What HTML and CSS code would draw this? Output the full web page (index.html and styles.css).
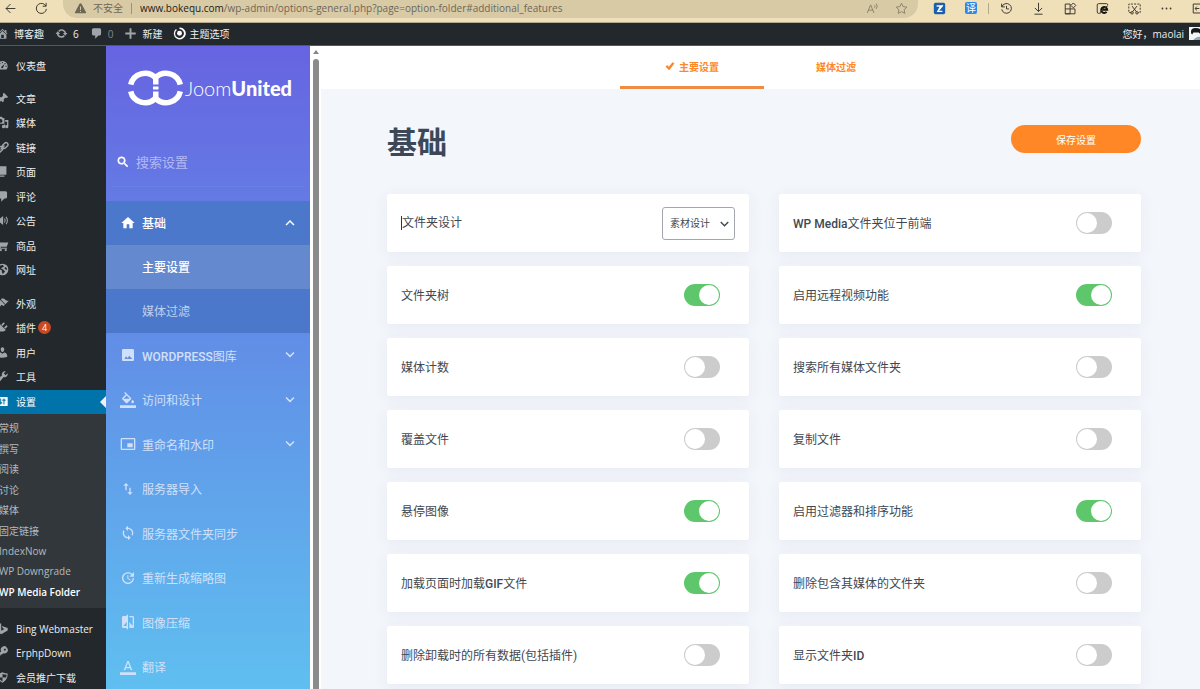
FILE: index.html
```html
<!DOCTYPE html>
<html lang="zh-CN">
<head>
<meta charset="utf-8">
<title>WP Media Folder - 主要设置</title>
<link rel="stylesheet" href="styles.css">
</head>
<body>
<svg class="sprite" aria-hidden="true">
  <symbol id="d-home" viewBox="0 0 20 20"><path d="M16 8.500l1.530 1.530-1.060 1.060L10 4.600l-6.470 6.490-1.060-1.060L10 2.500l4 4v-2h2v4zm-6-2.460l6 5.990V18H4v-5.970zM12 17v-5H8v5h4z"/></symbol>
  <symbol id="d-update" viewBox="0 0 20 20"><path d="M10.200 3.280c3.530 0 6.430 2.610 6.920 6h2.080l-3.500 4-3.500-4h2.320c-.45-1.970-2.210-3.450-4.320-3.450-1.450 0-2.730.71-3.540 1.780L4.950 5.660C6.230 4.200 8.110 3.280 10.200 3.280zm-.4 13.440c-3.520 0-6.430-2.610-6.920-6H.8l3.500-4c1.170 1.330 2.330 2.670 3.500 4H5.480c.45 1.970 2.210 3.450 4.320 3.450 1.450 0 2.730-.71 3.540-1.780l1.710 1.950c-1.280 1.460-3.150 2.380-5.250 2.380z"/></symbol>
  <symbol id="d-comment" viewBox="0 0 20 20"><path d="M5 2h10q.82 0 1.410.59T17 4v7q0 .82-.59 1.410T15 13h-2l-5 5v-5H5q-.82 0-1.410-.59T3 11V4q0-.82.59-1.410T5 2z"/></symbol>
  <symbol id="d-plus" viewBox="0 0 20 20"><path d="M18 8.500v3h-6.500V18h-3v-6.500H2v-3h6.500V2h3v6.500z"/></symbol>
  <symbol id="d-target" viewBox="0 0 20 20"><path d="M4.500 3A9.200 9.200 0 1 0 10 .8v2.400A6.800 6.800 0 1 1 6 4.500z"/><circle cx="10" cy="9.600" r="3.800"/></symbol>
  <symbol id="d-dash" viewBox="0 0 20 20"><path d="M3.760 16h12.480A8.150 8.150 0 0 0 18 11c0-4.420-3.580-8-8-8s-8 3.580-8 8c0 1.890.66 3.630 1.760 5zM10 4.500a1 1 0 1 1 0 2 1 1 0 0 1 0-2zM6 6a1 1 0 1 1 0 2 1 1 0 0 1 0-2zm8 0a1 1 0 1 1 0 2 1 1 0 0 1 0-2zm-5.400 5.400l4.600-3.900-2.200 5.600a1.500 1.500 0 1 1-2.400-1.700zM4.500 10a1 1 0 1 1 0 2 1 1 0 0 1 0-2zm11 0a1 1 0 1 1 0 2 1 1 0 0 1 0-2z" fill-rule="evenodd"/></symbol>
  <symbol id="d-pin" viewBox="0 0 20 20"><path d="M10.440 3.020l1.820-1.820 6.360 6.350-1.830 1.820c-1.050-.68-2.480-.57-3.410.36l-.75.75c-.92.93-1.040 2.350-.35 3.410l-1.830 1.820-2.410-2.410-2.800 2.790c-.42.420-3.380 2.710-3.800 2.290s1.860-3.390 2.280-3.810l2.790-2.790L4.100 9.360l1.830-1.820c1.050.69 2.480.57 3.400-.36l.75-.75c.93-.92 1.050-2.350.36-3.410z"/></symbol>
  <symbol id="d-media" viewBox="0 0 20 20"><path fill-rule="evenodd" d="M13 11V4c0-.55-.45-1-1-1h-1.670L9 1H5L3.670 3H2c-.55 0-1 .45-1 1v7c0 .55.450 1 1 1h10c.55 0 1-.45 1-1zM7 4.500a3 3 0 1 1 0 6 3 3 0 0 1 0-6z"/><path d="M14 6h5v10.500a2.500 2.500 0 1 1-2-2.450V9h-3v7.500a2.500 2.500 0 1 1-2-2.450V13h2z"/></symbol>
  <symbol id="d-link" viewBox="0 0 20 20"><g fill="none" stroke="currentColor" stroke-width="2.200"><rect x="9" y="4" width="10" height="6" rx="3" transform="rotate(-45 14 7)"/><rect x="1" y="10" width="10" height="6" rx="3" transform="rotate(-45 6 13)"/><path d="M7 13l6-6"/></g></symbol>
  <symbol id="d-page" viewBox="0 0 20 20"><path d="M6 15V2h10v13H6zm-1 1h8v2H3V5h2v11z"/></symbol>
  <symbol id="d-sound" viewBox="0 0 20 20"><path d="M2 7h4l5-4v14l-5-4H2z"/><path d="M13 7q2 3 0 6M15.500 4.500q4 5.500 0 11" fill="none" stroke="currentColor" stroke-width="1.600"/></symbol>
  <symbol id="d-cart" viewBox="0 0 20 20"><path d="M1 3h3l1 2.500h14L16.500 12H7l.4 1.500H17V15H6L3.300 4.700H1z"/><circle cx="7.500" cy="17" r="1.700"/><circle cx="15" cy="17" r="1.700"/></symbol>
  <symbol id="d-globe" viewBox="0 0 20 20"><path fill-rule="evenodd" d="M10 1a9 9 0 1 1 0 18 9 9 0 0 1 0-18zM4 6l2 4 3 1v3l1.500 3L14 13l-3-3-3-1 1-2 3-1-1-3q-4-.5-7 3zm10 0l-1 2 3 3 1-2q-.5-2-3-3z"/></symbol>
  <symbol id="d-brush" viewBox="0 0 20 20"><path d="M14.480 11.060L7.410 3.990l1.500-1.500c.5-.56 2.300-.47 3.510.32 1.210.8 1.430 1.280 2.910 2.100 1.180.640 2.450 1.260 4.450.85zm-.71.71L6.700 4.700 4.930 6.470c-.39.390-.39 1.020 0 1.410l1.060 1.060c.39.390.39 1.030 0 1.420-.6.600-1.430 1.110-2.210 1.690-.35.260-.7.530-1.010.84C1.430 14.230.4 16.080 1.400 17.070c.99 1 2.840-.03 4.180-1.360.31-.31.580-.66.850-1.020.57-.78 1.080-1.610 1.690-2.210.39-.39 1.020-.39 1.410 0l1.060 1.060c.39.390 1.020.39 1.410 0z"/></symbol>
  <symbol id="d-plug" viewBox="0 0 20 20"><path d="M13.110 4.360L9.870 7.600 8 5.730l3.240-3.240c.35-.34 1.050-.2 1.560.32.520.51.660 1.210.31 1.550zm-8 1.770l.91-1.120 9.010 9.010-1.190.84c-.71.71-2.630 1.160-3.820 1.160H6.140L4.900 17.260c-.59.590-1.540.590-2.120 0-.59-.58-.59-1.530 0-2.120l1.240-1.240v-3.880c0-1.130.4-3.190 1.090-3.890zm7.260 3.970l3.240-3.240c.34-.35 1.040-.21 1.550.31.520.51.660 1.210.31 1.550l-3.240 3.250z"/></symbol>
  <symbol id="d-user" viewBox="0 0 20 20"><path d="M10 9.250c-2.270 0-2.730-3.440-2.730-3.440C7 4.020 7.820 2 9.970 2c2.160 0 2.980 2.020 2.710 3.810 0 0-.41 3.440-2.680 3.440zm0 2.570L12.720 10c2.390 0 4.520 2.330 4.520 4.530v2.490s-3.650 1.130-7.240 1.130c-3.650 0-7.240-1.130-7.240-1.130v-2.490c0-2.250 1.940-4.480 4.470-4.480z"/></symbol>
  <symbol id="d-wrench" viewBox="0 0 20 20"><path d="M16.680 9.770c-1.340 1.340-3.300 1.670-4.950.99l-5.410 6.520c-.99.990-2.590.99-3.580 0s-.99-2.590 0-3.570l6.520-5.420c-.68-1.650-.35-3.610.99-4.950 1.280-1.280 3.120-1.620 4.720-1.060l-2.890 2.890 2.820 2.820 2.860-2.870c.53 1.580.18 3.390-1.080 4.650z"/></symbol>
  <symbol id="d-settings" viewBox="0 0 20 20"><path fill-rule="evenodd" d="M18 16V4c0-.55-.45-1-1-1H3c-.55 0-1 .45-1 1v12c0 .55.450 1 1 1h14c.55 0 1-.45 1-1zM8 11h1c.55 0 1 .45 1 1s-.45 1-1 1H8v1.500H6.500V13h-1c-.55 0-1-.45-1-1s.45-1 1-1h1V5.500H8zm5-2h1c.55 0 1-.45 1-1s-.45-1-1-1h-1V5.500h-1.500V7h-1c-.55 0-1 .45-1 1s.45 1 1 1h1v5.500H13z"/></symbol>
  <symbol id="d-bing" viewBox="0 0 20 20"><path d="M4 1l4 1.500v11l5-2.800-2.500-1.200L9 6l9 3.200V13L8 19l-4-2.500z"/></symbol>
  <symbol id="d-key" viewBox="0 0 20 20"><path fill-rule="evenodd" d="M17 3a5 5 0 0 1-5.500 8L9 13H7v2H5v2H2v-3l6-6a5 5 0 0 1 9-5zm-2 2a1.500 1.500 0 1 0-2 2 1.500 1.500 0 0 0 2-2z"/></symbol>
  <symbol id="d-shield" viewBox="0 0 20 20"><path fill-rule="evenodd" d="M10 2q4 2 8 2 0 10-8 14Q2 14 2 4q4 0 8-2zm0 2.500V10h5.600q.6-2 .7-4.300Q13 5.500 10 4.500zM10 10H4.400q1.400 4 5.600 6z"/></symbol>

  <symbol id="m-search" viewBox="0 0 24 24"><path stroke="currentColor" d="M15.500 14h-.79l-.28-.27A6.471 6.471 0 0 0 16 9.500 6.500 6.500 0 1 0 9.500 16c1.610 0 3.090-.59 4.230-1.570l.27.280v.79l5 4.990L20.490 19l-4.990-5zm-6 0C7.010 14 5 11.990 5 9.500S7.010 5 9.500 5 14 7.010 14 9.500 11.990 14 9.500 14z"/></symbol>
  <symbol id="m-home" viewBox="0 0 24 24"><path d="M10 20v-6h4v6h5v-8h3L12 3 2 12h3v8z"/></symbol>
  <symbol id="m-image" viewBox="0 0 24 24"><path d="M21 19V5c0-1.100-.9-2-2-2H5c-1.100 0-2 .9-2 2v14c0 1.100.9 2 2 2h14c1.100 0 2-.9 2-2zm-14.500-1l2.500-4 2.200 2.600L14 13l4.500 5z"/></symbol>
  <symbol id="m-fill" viewBox="0 0 24 24"><path d="M16.560 8.940L7.620 0 6.210 1.410l2.380 2.380-5.150 5.150c-.59.590-.59 1.540 0 2.120l5.500 5.500c.29.290.68.440 1.060.44s.77-.15 1.060-.44l5.500-5.500c.59-.58.59-1.530 0-2.120zM5.210 10L10 5.210 14.790 10zM19 11.500s-2 2.170-2 3.500c0 1.100.9 2 2 2s2-.9 2-2c0-1.330-2-3.500-2-3.500zM0 20h24v4H0z"/></symbol>
  <symbol id="m-pip" viewBox="0 0 24 24"><path d="M19 11h-8v6h8v-6zm4 8V4.980C23 3.880 22.100 3 21 3H3c-1.100 0-2 .88-2 1.980V19c0 1.100.9 2 2 2h18c1.100 0 2-.9 2-2zm-2 .02H3V4.970h18v14.050z"/></symbol>
  <symbol id="m-import" viewBox="0 0 24 24"><path d="M9 3L5 6.990h3V14h2V6.990h3L9 3zm7 14.010V10h-2v7.010h-3L15 21l4-3.990h-3z"/></symbol>
  <symbol id="m-sync" viewBox="0 0 24 24"><path d="M12 4V1L8 5l4 4V6c3.310 0 6 2.690 6 6 0 1.010-.25 1.970-.7 2.800l1.460 1.460A7.930 7.930 0 0 0 20 12c0-4.420-3.580-8-8-8zm0 14c-3.310 0-6-2.690-6-6 0-1.010.25-1.970.7-2.800L5.240 7.740A7.930 7.930 0 0 0 4 12c0 4.420 3.580 8 8 8v3l4-4-4-4v3z"/></symbol>
  <symbol id="m-update" viewBox="0 0 24 24"><path d="M21 10.120h-6.780l2.740-2.820c-2.730-2.700-7.150-2.800-9.880-.1-2.730 2.710-2.730 7.080 0 9.790s7.150 2.710 9.880 0C18.320 15.650 19 14.080 19 12.100h2c0 1.980-.88 4.550-2.640 6.290-3.510 3.480-9.210 3.480-12.720 0-3.500-3.470-3.530-9.110-.02-12.580s9.140-3.470 12.650 0L21 3v7.120zM12.500 8v4.250l3.500 2.080-.72 1.210L11 13V8h1.500z"/></symbol>
  <symbol id="m-compare" viewBox="0 0 24 24"><path d="M10 3H5c-1.100 0-2 .9-2 2v14c0 1.100.9 2 2 2h5v2h2V1h-2v2zm0 15H5l5-6v6zm9-15h-5v2h5v13l-5-6v9h5c1.100 0 2-.9 2-2V5c0-1.100-.9-2-2-2z"/></symbol>
  <symbol id="m-text" viewBox="0 0 24 24"><path d="M0 20h24v4H0zM11 3L5.500 17h2.250l1.120-3h6.250l1.120 3h2.250L13 3h-2zm-1.380 9L12 5.670 14.380 12H9.620z"/></symbol>
  <symbol id="m-down" viewBox="0 0 24 24"><path d="M7.410 7.840L12 12.420l4.590-4.580L18 9.250l-6 6-6-6z"/></symbol>
  <symbol id="m-up" viewBox="0 0 24 24"><path d="M7.410 15.410L12 10.830l4.590 4.580L18 14l-6-6-6 6z"/></symbol>
  <symbol id="m-check" viewBox="0 0 20 20"><path d="M1 11l3.500-3 3 3.500L15 2.500l4 2L9 18H7.500z"/></symbol>

  <symbol id="b-back" viewBox="0 0 16 16"><path class="line" d="M14 8H2.500M8 2.500L2.500 8 8 13.500"/></symbol>
  <symbol id="b-reload" viewBox="0 0 16 16"><path class="line" d="M14 8.500a6.200 6.200 0 1 1-2-5.200l1.500 1.700M13.700 1v4.200H9.500"/></symbol>
  <symbol id="b-warn" viewBox="0 0 16 16"><path fill-rule="evenodd" d="M8 1.500q.8 0 1.200.7l5.600 10.400q.7 1.400-.8 1.400H2q-1.500 0-.8-1.400L6.800 2.200Q7.200 1.500 8 1.500zM7.400 5.500v4.200h1.200V5.500zm0 5.500v1.300h1.200V11z"/></symbol>
  <symbol id="b-read" viewBox="0 0 16 16"><path class="line" d="M1.500 13.500L5.700 3.500l4.200 10M3 10h5.500M10.500 4q1.300 1.500 0 3M12.500 2q2.800 3 0 6.500"/></symbol>
  <symbol id="b-star" viewBox="0 0 16 16"><path class="line" d="M8 1.500l2 4.200 4.600.6-3.400 3.200.9 4.600L8 11.900l-4.100 2.200.9-4.600L1.400 6.300 6 5.700z"/></symbol>
  <symbol id="b-note" viewBox="0 0 16 16"><rect x="1" y="1" width="14" height="14" rx="2" fill="#1c5fae"/><path d="M4.500 5h5L6 11.500h5.500M7.500 9.500L12 4" fill="none" stroke="#fff" stroke-width="1.700"/></symbol>
  <symbol id="b-history" viewBox="0 0 16 16"><path class="line" d="M2 2v4h4M2.300 6a6 6 0 1 1-.2 3M8 4.700V8.500h3"/></symbol>
  <symbol id="b-download" viewBox="0 0 16 16"><path class="line" d="M8 1v10.500M3.500 7.300L8 11.800l4.500-4.500M3 15h10"/></symbol>
  <symbol id="b-apps" viewBox="0 0 16 16"><path class="line" d="M1.500 2.500h6v12h-6zM7.500 8.500h6v6h-12M1.500 8.500h6M11.500 1.200l3 3-3 3-3-3z"/></symbol>
  <symbol id="b-ie" viewBox="0 0 16 16"><path class="line" d="M4.500 14H3.200Q1.500 14 1.500 12.300V3.700Q1.500 2 3.200 2h9.600q1.700 0 1.700 1.700"/><path d="M6.500 9.600h7.300a3.700 3.700 0 1 0-.8 2.600" fill="none" stroke="#15130e" stroke-width="2.400"/><path d="M5 14.500Q4.500 10 14.800 4.500" class="line"/></symbol>
  <symbol id="b-snip" viewBox="0 0 16 16"><path class="line" stroke-dasharray="2.500 1.500" d="M4 13H1V2.500h14V13h-3"/><path class="line" d="M5 5l5.300 7M11 5l-5.300 7"/><circle class="line" cx="5" cy="13.300" r="1.500"/><circle class="line" cx="11" cy="13.300" r="1.500"/></symbol>
  <symbol id="b-more" viewBox="0 0 16 16"><circle cx="3" cy="8" r="1.100"/><circle cx="8" cy="8" r="1.100"/><circle cx="13" cy="8" r="1.100"/></symbol>
  <symbol id="b-panel" viewBox="0 0 16 16"><path class="line" d="M1.500 2.500h13v11h-13zM11 2.500v11M9 8H4M6 5.700L3.700 8 6 10.300"/></symbol>
</svg>

<header class="browser">
  <button class="nav-btn" aria-label="返回"><svg><use href="#b-back"/></svg></button>
  <button class="nav-btn" aria-label="刷新"><svg><use href="#b-reload"/></svg></button>
  <div class="address">
    <svg><use href="#b-warn"/></svg>
    <span class="insecure">不安全</span>
    <span class="url"><b>www.bokequ.com</b>/wp-admin/options-general.php?page=option-folder#additional_features</span>
    <button aria-label="朗读"><svg><use href="#b-read"/></svg></button>
    <button aria-label="收藏"><svg><use href="#b-star"/></svg></button>
  </div>
  <div class="tools">
    <button aria-label="笔记"><svg><use href="#b-note"/></svg></button>
    <button aria-label="翻译"><span class="translate">译</span></button>
    <span class="rule"></span>
    <button aria-label="历史"><svg><use href="#b-history"/></svg></button>
    <button aria-label="下载"><svg><use href="#b-download"/></svg></button>
    <button aria-label="应用"><svg><use href="#b-apps"/></svg></button>
    <button aria-label="IE 模式"><svg><use href="#b-ie"/></svg></button>
    <button aria-label="截图"><svg><use href="#b-snip"/></svg></button>
    <button aria-label="更多"><svg><use href="#b-more"/></svg></button>
    <button aria-label="侧栏"><svg><use href="#b-panel"/></svg></button>
  </div>
</header>

<nav class="adminbar">
  <a href="#" class="site"><svg><use href="#d-home"/></svg>博客趣</a>
  <a href="#"><svg><use href="#d-update"/></svg>6</a>
  <a href="#" class="muted"><svg><use href="#d-comment"/></svg>0</a>
  <a href="#"><svg><use href="#d-plus"/></svg>新建</a>
  <a href="#" class="theme"><svg><use href="#d-target"/></svg>主题选项</a>
  <a href="#" class="account">您好，maolai
    <svg class="avatar" viewBox="0 0 12 12"><path d="M0 0h12v12H0z" fill="#f4f4f4"/><path d="M2 6Q1 1 6 1t6 3v4L9 5 4 5 3 7z" fill="#15171a"/><path d="M4 12q2-3 8-3v3z" fill="#8fa6b4"/></svg>
  </a>
</nav>

<div class="shell">
  <nav class="wp-menu">
    <ul>
      <li><a href="#"><svg><use href="#d-dash"/></svg>仪表盘</a></li>
    </ul>
    <ul>
      <li><a href="#"><svg><use href="#d-pin"/></svg>文章</a></li>
      <li><a href="#"><svg><use href="#d-media"/></svg>媒体</a></li>
      <li><a href="#"><svg><use href="#d-link"/></svg>链接</a></li>
      <li><a href="#"><svg><use href="#d-page"/></svg>页面</a></li>
      <li><a href="#"><svg><use href="#d-comment"/></svg>评论</a></li>
      <li><a href="#"><svg><use href="#d-sound"/></svg>公告</a></li>
      <li><a href="#"><svg><use href="#d-cart"/></svg>商品</a></li>
      <li><a href="#"><svg><use href="#d-globe"/></svg>网址</a></li>
    </ul>
    <div>
      <ul>
        <li><a href="#"><svg><use href="#d-brush"/></svg>外观</a></li>
        <li><a href="#"><svg><use href="#d-plug"/></svg>插件<span class="count">4</span></a></li>
        <li><a href="#"><svg><use href="#d-user"/></svg>用户</a></li>
        <li><a href="#"><svg><use href="#d-wrench"/></svg>工具</a></li>
        <li class="current"><a href="#"><svg><use href="#d-settings"/></svg>设置</a></li>
      </ul>
      <ul class="submenu">
        <li><a href="#">常规</a></li>
        <li><a href="#">撰写</a></li>
        <li><a href="#">阅读</a></li>
        <li><a href="#">讨论</a></li>
        <li><a href="#">媒体</a></li>
        <li><a href="#">固定链接</a></li>
        <li><a href="#">IndexNow</a></li>
        <li><a href="#">WP Downgrade</a></li>
        <li><a href="#" class="active">WP Media Folder</a></li>
      </ul>
    </div>
    <ul>
      <li><a href="#"><svg><use href="#d-bing"/></svg>Bing Webmaster</a></li>
      <li><a href="#"><svg><use href="#d-key"/></svg>ErphpDown</a></li>
      <li><a href="#"><svg><use href="#d-shield"/></svg>会员推广下载</a></li>
    </ul>
  </nav>

  <aside class="panel">
    <a href="#" class="logo">
      <svg viewBox="0 0 56 36" aria-hidden="true"><g fill="none" stroke="#fff" stroke-width="5.500"><path d="M3.700 14.700A14.700 14.700 0 0 1 28.500 7.700 14.700 14.700 0 0 1 53.300 14.700M3.700 21.300A14.700 14.700 0 0 0 28.500 28.300 14.700 14.700 0 0 0 53.300 21.300"/></g><path fill="#fff" d="M26 9h5.500v5.500H26zM26 16.500h5.500v3H26zM26 21.500h5.500V27H26z"/></svg>
      <span>Joom<b>United</b></span>
    </a>
    <label class="search"><svg><use href="#m-search"/></svg><input type="text" placeholder="搜索设置" aria-label="搜索设置"></label>
    <ul class="open-group">
      <li><a href="#" class="head"><svg><use href="#m-home"/></svg>基础<svg class="arrow"><use href="#m-up"/></svg></a></li>
      <li><a href="#" class="sub selected">主要设置</a></li>
      <li><a href="#" class="sub">媒体过滤</a></li>
    </ul>
    <ul class="links">
      <li><a href="#"><svg><use href="#m-image"/></svg><span><span class="latin">WORDPRESS</span>图库</span><svg class="arrow"><use href="#m-down"/></svg></a></li>
      <li><a href="#"><svg><use href="#m-fill"/></svg>访问和设计<svg class="arrow"><use href="#m-down"/></svg></a></li>
      <li><a href="#"><svg><use href="#m-pip"/></svg>重命名和水印<svg class="arrow"><use href="#m-down"/></svg></a></li>
      <li><a href="#"><svg><use href="#m-import"/></svg>服务器导入</a></li>
      <li><a href="#"><svg><use href="#m-sync"/></svg>服务器文件夹同步</a></li>
      <li><a href="#"><svg><use href="#m-update"/></svg>重新生成缩略图</a></li>
      <li><a href="#"><svg><use href="#m-compare"/></svg>图像压缩</a></li>
      <li><a href="#"><svg><use href="#m-text"/></svg>翻译</a></li>
    </ul>
  </aside>

  <div class="scrollbar" aria-hidden="true"><span class="scroll-up"></span><span class="thumb"></span></div>

  <main>
    <nav class="tabs">
      <a href="#" class="on"><svg><use href="#m-check"/></svg>主要设置</a>
      <a href="#">媒体过滤</a>
    </nav>
    <form class="content">
      <div class="heading">
        <h1>基础</h1>
        <button type="button" class="save">保存设置</button>
      </div>
      <div class="cards">
        <div class="card"><label for="s1" class="caret">文件夹设计</label>
          <span class="select"><select id="s1"><option>素材设计</option></select><svg><use href="#m-down"/></svg></span></div>
        <div class="card"><label for="s2"><span class="latin">WP Media</span>文件夹位于前端</label><input type="checkbox" id="s2"></div>
        <div class="card"><label for="s3">文件夹树</label><input type="checkbox" id="s3" checked></div>
        <div class="card"><label for="s4">启用远程视频功能</label><input type="checkbox" id="s4" checked></div>
        <div class="card"><label for="s5">媒体计数</label><input type="checkbox" id="s5"></div>
        <div class="card"><label for="s6">搜索所有媒体文件夹</label><input type="checkbox" id="s6"></div>
        <div class="card"><label for="s7">覆盖文件</label><input type="checkbox" id="s7"></div>
        <div class="card"><label for="s8">复制文件</label><input type="checkbox" id="s8"></div>
        <div class="card"><label for="s9">悬停图像</label><input type="checkbox" id="s9" checked></div>
        <div class="card"><label for="s10">启用过滤器和排序功能</label><input type="checkbox" id="s10" checked></div>
        <div class="card"><label for="s11">加载页面时加载<span class="latin">GIF</span>文件</label><input type="checkbox" id="s11" checked></div>
        <div class="card"><label for="s12">删除包含其媒体的文件夹</label><input type="checkbox" id="s12"></div>
        <div class="card"><label for="s13">删除卸载时的所有数据(包括插件)</label><input type="checkbox" id="s13"></div>
        <div class="card"><label for="s14">显示文件夹<span class="latin">ID</span></label><input type="checkbox" id="s14"></div>
      </div>
    </form>
  </main>
</div>
</body>
</html>
```
FILE: styles.css
```css
* { box-sizing: border-box; }

body {
  margin: 0;
  height: 100vh;
  display: flex;
  flex-direction: column;
  overflow: hidden;
  background: #f3f6fb;
  font: 10px "Open Sans", "Noto Sans CJK SC", sans-serif;
}

ul { margin: 0; padding: 0; list-style: none; }
a { color: inherit; text-decoration: none; }
button { padding: 0; border: 0; background: none; color: inherit; font: inherit; }
svg { flex: none; fill: currentColor; }
.sprite { display: none; }
.line { fill: none; stroke: currentColor; stroke-width: 1.2; }
.latin { font-weight: 500; }

/* Browser toolbar */
.browser {
  flex: none;
  display: flex;
  align-items: flex-start;
  height: 23px;
  background: #f0e0ba;
  border-bottom: 1px solid #b5ab93;
  color: #3d392f;
}
.browser button { display: flex; align-items: center; justify-content: center; height: 16px; }
.browser svg { width: 13px; height: 13px; }
.nav-btn { width: 21px; }
.nav-btn + .nav-btn { margin: 0 11px 0 10px; }
.address {
  flex: 1;
  min-width: 0;
  display: flex;
  align-items: center;
  height: 18px;
  padding: 0 2px 2px 11px;
  border-radius: 0 0 14px 14px;
  background: #d9caa6;
  color: #6d6758;
}
.address button { width: 29px; color: #8c836c; }
.insecure { margin-left: 6px; padding-right: 8px; border-right: 1px solid #9c927a; line-height: 11px; }
.url { flex: 1; margin-left: 8px; white-space: nowrap; overflow: hidden; }
.url b { font-weight: 400; color: #1d1b16; }
.tools { flex: 0 0 282px; display: flex; align-items: center; height: 16px; padding-left: 5px; overflow: hidden; }
.tools button { flex: none; width: 32px; }
.rule { flex: none; width: 1px; height: 11px; margin: 0 1px; background: #b3a88a; }
.translate { width: 12px; height: 12px; border-radius: 2px; background: #2b88e6; color: #fff; line-height: 12px; }

/* WordPress admin bar */
.adminbar {
  flex: none;
  display: flex;
  align-items: center;
  gap: 11px;
  height: 23px;
  padding-bottom: 1px;
  background: #23282d;
  border-bottom: 1px solid #55565f;
  color: #eee;
}
.adminbar a { display: flex; align-items: center; gap: 5px; }
.adminbar svg { width: 13px; height: 13px; color: #a0a5aa; }
.adminbar .site { margin-left: -4px; }
.adminbar .muted { color: #82878c; }
.adminbar .muted svg { color: #a0a5aa; }
.adminbar .theme { gap: 3px; }
.adminbar .theme svg { color: #fff; }
.adminbar .account { margin: 0 -2px 0 auto; }

.shell { flex: 1; min-height: 0; display: flex; }

/* WordPress side menu */
.wp-menu {
  flex: none;
  display: flex;
  flex-direction: column;
  gap: 9px;
  width: 106px;
  padding-top: 8px;
  overflow: hidden;
  background: #23282d;
  color: #eee;
  white-space: nowrap;
}
.wp-menu a { display: flex; align-items: center; height: 24px; padding-bottom: 1px; gap: 7px; }
.wp-menu li:nth-child(even) a { height: 25px; padding-bottom: 2px; }
.wp-menu svg { width: 13px; height: 13px; margin-left: -4px; color: #a0a5aa; }
.count {
  width: 13px;
  height: 13px;
  margin-left: -5px;
  border-radius: 50%;
  background: #ca4a1f;
  color: #fff;
  font-size: 9px;
  line-height: 13px;
  text-align: center;
}
.wp-menu .current a { background: #0073aa; color: #fff; }
.wp-menu .current svg { color: #fff; }
.current a::after {
  content: "";
  margin-left: auto;
  border: 6px solid transparent;
  border-left-width: 0;
  border-right-color: #f1f1f1;
}
.submenu { padding: 4px 0 5px; background: #32373c; color: #b4b9be; }
.submenu a { margin-left: -1px; }
.submenu li:nth-child(odd) a { height: 21px; padding-bottom: 2px; }
.submenu li:nth-child(even) a { height: 20px; }
.submenu .active { color: #fff; font-weight: 600; }

/* Plugin side panel */
.panel {
  flex: none;
  width: 204px;
  overflow: hidden;
  background: linear-gradient(#6764e1, #6192e7 50%, #5fbff0);
  color: #d0e0fa;
  font: 12px Roboto, "Noto Sans CJK SC", sans-serif;
}
.logo { display: flex; align-items: center; gap: 2px; height: 36px; margin: 24px 0 0 21px; color: #fff; }
.logo svg { width: 56px; height: 36px; }
.logo span { font: 300 20px Lato, sans-serif; }
.logo b { font-weight: 900; }
.search {
  display: flex;
  align-items: center;
  gap: 6px;
  height: 49px;
  margin: 32px 6px 14px;
  padding-left: 4px;
  border-bottom: 1px solid #6b80e6;
  color: #fff;
}
.search svg { width: 14px; height: 14px; }
.search input {
  flex: 1;
  min-width: 0;
  padding: 0;
  border: 0;
  outline: 0;
  background: none;
  color: #fff;
  font: 13px Roboto, "Noto Sans CJK SC", sans-serif;
}
.search input::placeholder { color: #b3b9f3; opacity: 1; }
.panel li a { display: flex; align-items: center; gap: 6px; height: 44px; padding: 0 11px 1px 14px; }
.links li:nth-child(odd) a { height: 45px; }
.panel li svg { width: 16px; height: 16px; }
.panel li .arrow { width: 18px; height: 18px; margin-left: auto; }
.open-group { background: #4b78cb; }
.panel .head { color: #fff; font-weight: 500; }
.panel li .sub { padding-left: 36px; color: #bdd0f0; }
.panel li .selected { background: #6489cf; color: #fff; font-weight: 500; }

/* Panel scrollbar */
.scrollbar { flex: none; display: flex; flex-direction: column; align-items: center; width: 11px; background: #fff; }
.scroll-up { margin: 4px 0 5px; border: 3px solid transparent; border-top-width: 0; border-bottom: 4px solid #858585; }
.thumb { flex: 1; width: 6px; border-radius: 3px 3px 0 0; background: #8b8b8b; }

/* Settings */
main { flex: 1; min-width: 0; overflow: hidden; }
.tabs { display: flex; justify-content: center; height: 43px; padding: 0 59px 0 66px; background: #fff; }
.tabs a {
  display: flex;
  align-items: center;
  justify-content: center;
  gap: 4px;
  width: 144px;
  border-bottom: 3px solid transparent;
  color: #ff8726;
  font-weight: 700;
}
.tabs .on { border-color: #ee8c44; }
.tabs svg { width: 10px; height: 10px; }
.content { padding: 35px 59px 20px 66px; }
.heading { display: flex; justify-content: space-between; align-items: flex-start; height: 70px; }
h1 { margin: 0; color: #3c4858; font: 700 30px/38px Roboto, "Noto Sans CJK SC", sans-serif; }
.save {
  width: 130px;
  height: 28px;
  border-radius: 14px;
  background: #ff8726;
  color: #fff;
}
.content .save { margin-top: 1px; }
.cards { display: grid; grid-template-columns: 1fr 1fr; gap: 14px 30px; }
.card {
  display: flex;
  align-items: center;
  justify-content: space-between;
  height: 58px;
  padding: 0 14px;
  border-radius: 3px;
  background: #fff;
  box-shadow: 0 3px 16px rgba(70, 80, 120, 0.07);
  color: #404852;
  font: 12px Roboto, "Noto Sans CJK SC", sans-serif;
}
.card label { margin-bottom: 2px; }
.card .caret { margin: 0; border-left: 1px solid #333; line-height: 14px; }
.card input {
  appearance: none;
  width: 36px;
  height: 22px;
  margin: 0 15px;
  padding: 1px;
  border-radius: 11px;
  background: #ccc;
}
.card input::before { content: ""; display: block; width: 20px; height: 20px; border-radius: 50%; background: #fff; }
.card input:checked { padding-left: 15px; background: #5ec76c; }
.select { position: relative; }
.select select {
  display: block;
  appearance: none;
  width: 73px;
  height: 33px;
  padding: 0 7px;
  border: 1px solid #a3a7ad;
  border-radius: 3px;
  background: #fff;
  color: #404852;
  font: 10px Roboto, "Noto Sans CJK SC", sans-serif;
}
.select svg { position: absolute; right: 2px; top: 9px; width: 17px; height: 17px; pointer-events: none; }
```
